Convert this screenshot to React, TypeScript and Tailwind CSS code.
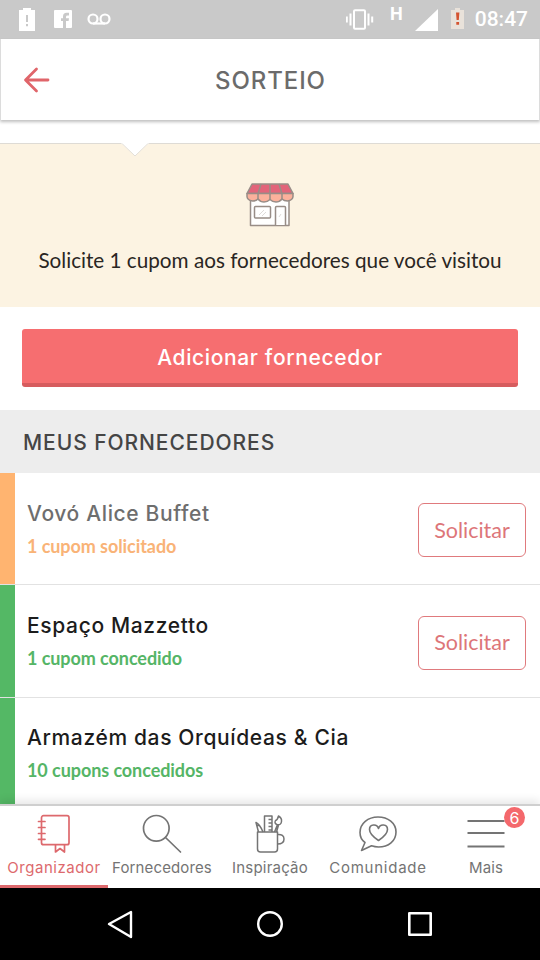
import React from "react";

const suppliers = [
  {
    name: "Vovó Alice Buffet",
    status: "1 cupom solicitado",
    bar: "bg-[#ffb470]",
    nameClass: "text-[#6e6e6e]",
    statusClass: "text-[#f9b377]",
    action: true,
  },
  {
    name: "Espaço Mazzetto",
    status: "1 cupom concedido",
    bar: "bg-[#54b865]",
    nameClass: "text-[#1c1c1c]",
    statusClass: "text-[#55b566]",
    action: true,
  },
  {
    name: "Armazém das Orquídeas & Cia",
    status: "10 cupons concedidos",
    bar: "bg-[#54b865]",
    nameClass: "text-[#1c1c1c]",
    statusClass: "text-[#55b566]",
    action: false,
  },
];

const tabs = [
  { label: "Organizador", icon: <NotebookIcon />, active: true, tracking: "tracking-[0.55px]" },
  { label: "Fornecedores", icon: <SearchIcon />, tracking: "tracking-[0.13px]" },
  { label: "Inspiração", icon: <MugIcon />, tracking: "tracking-[0.2px]" },
  { label: "Comunidade", icon: <CommunityIcon />, tracking: "tracking-[0.75px]" },
  { label: "Mais", icon: <MenuIcon />, badge: 6, tracking: "tracking-[0.1px]" },
];

export default function App() {
  return (
    <div className="flex flex-col w-[540px] h-[960px] overflow-hidden bg-white font-[Inter,sans-serif]">
      <StatusBar />

      <header className="relative z-10 flex items-center h-[81px] shrink-0 px-[22px] pt-px bg-white border-x border-[#dcdcdc] shadow-[0_2px_3px_rgba(0,0,0,0.25)]">
        <svg width="28" height="26" viewBox="0 0 28 26" fill="none" stroke="#e0656a" strokeWidth="2.800" strokeLinecap="round" strokeLinejoin="round">
          <path d="M13.500 2 2.500 13l11 11M3 13h22" />
        </svg>
        <h1 className="flex-1 pt-px pr-[27px] text-center text-[24px] font-medium tracking-[0.9px] text-[#6b6b6b]">
          SORTEIO
        </h1>
      </header>

      <main className="flex-1 min-h-0 overflow-hidden pt-[23px]">
        <Banner />

        <div className="px-[22px] pt-[22px] pb-[23px]">
          <button className="block w-full h-[58px] pt-[3px] rounded-[3px] bg-[#f66e70] border-b-4 border-[#d65c5e] text-white text-[21px] font-medium tracking-[0.63px]">
            Adicionar fornecedor
          </button>
        </div>

        <h2 className="flex items-center h-[63px] pt-0.5 px-[23px] bg-[#ededed] text-[21px] font-medium tracking-[0.93px] text-[#454545]">
          MEUS FORNECEDORES
        </h2>

        {suppliers.map((item) => (
          <Supplier key={item.name} {...item} />
        ))}
      </main>

      <nav className="relative z-10 grid grid-cols-5 h-[84px] shrink-0 bg-white border-t-2 border-[#cfcfcf] shadow-[0_-4px_8px_rgba(0,0,0,0.09)]">
        {tabs.map((tab) => (
          <Tab key={tab.label} {...tab} />
        ))}
      </nav>

      <div className="flex items-center justify-between h-[72px] shrink-0 px-[105px] bg-black">
        <svg width="30" height="30" viewBox="0 0 30 30" fill="none" stroke="#fff" strokeWidth="2.400" strokeLinejoin="round">
          <path d="M4 15 26 3v25z" />
        </svg>
        <svg width="30" height="30" viewBox="0 0 30 30" fill="none" stroke="#fff" strokeWidth="2.400">
          <circle cx="15" cy="15" r="11.800" />
        </svg>
        <svg width="30" height="30" viewBox="0 0 30 30" fill="none" stroke="#fff" strokeWidth="2.600" strokeLinejoin="round">
          <path d="M4.300 4.300h21.400v21.400H4.300z" />
        </svg>
      </div>
    </div>
  );
}

function StatusBar() {
  return (
    <div className="flex items-center justify-between h-[39px] shrink-0 pl-[19px] pr-[12px] bg-[#c9c9c9]">
      <div className="flex items-center">
        <svg width="16" height="26" viewBox="0 0 16 26">
          <path d="M0 3h4V1h8v2h4v21H0z" fill="#fff" />
          <path d="M7 8h2v7H7zM7 17h2v2.200H7z" fill="#c9c9c9" />
        </svg>
        <svg className="ml-[19px] -mt-px" width="18" height="18" viewBox="0 0 18 18">
          <path d="M1 0h16q1 0 1 1v16q0 1-1 1H1q-1 0-1-1V1q0-1 1-1z" fill="#fff" />
          <path d="M9 18v-7H7V8.300h2V6.500q0-3.700 3.700-3.700H15v2.700h-1.500q-1.500 0-1.500 1.400v1.400h3l-.4 2.700H12v7z" fill="#c9c9c9" />
        </svg>
        <svg className="ml-[15px] -mt-0.5" width="24" height="12" viewBox="0 0 24 12" fill="none" stroke="#fff" strokeWidth="2.200">
          <circle cx="6" cy="6" r="4.500" />
          <circle cx="18" cy="6" r="4.500" />
          <path d="M6 10.500h12" />
        </svg>
      </div>
      <div className="flex items-center">
        <svg width="28" height="21" viewBox="0 0 28 21" fill="none" stroke="#fff" strokeWidth="2">
          <rect x="8" y="1.200" width="11" height="18.500" rx="1" />
          <path d="M4.500 4.500v12M.8 7.500v6M22.500 4.500v12M26.200 7.500v6" />
        </svg>
        <span className="self-start ml-[16px] font-[Roboto,sans-serif] text-[18px] leading-[21px] font-bold text-white">H</span>
        <svg className="ml-[12px]" width="23" height="22" viewBox="0 0 23 22">
          <path d="M23 0v22H0z" fill="#fff" />
        </svg>
        <svg className="ml-[13px] mr-[11px] -mt-0.5" width="13" height="22" viewBox="0 0 13 22">
          <path d="M0 2h4V0h5v2h4v19H0z" fill="#e9e2da" />
          <path d="M5 4.500h3.400l-.6 7.500H5.600zM5.300 14h2.800v2.800H5.300z" fill="#d4532f" />
        </svg>
        <span className="pt-px font-[Roboto,sans-serif] text-[21px] font-medium text-white">08:47</span>
      </div>
    </div>
  );
}

function Banner() {
  return (
    <section className="relative flex flex-col items-center h-[164px] pt-[39px] bg-[#fcf3e2] border-t border-[#dedbd5]">
      <svg className="absolute left-[121px] -top-px" width="28" height="14" viewBox="0 0 28 14">
        <path d="M0 0h28L14 13z" fill="#fff" />
        <path d="M1 .5 14 13 27 .5" fill="none" stroke="#e3dfd8" strokeWidth="1" />
        <path d="M1.500 0h25" stroke="#fff" strokeWidth="1.500" />
      </svg>
      <ShopIcon />
      <p className="mt-[19px] font-[Lato,sans-serif] text-[20.700px] leading-[28px] whitespace-nowrap text-[#2a2623]">
        Solicite 1 cupom aos fornecedores que você visitou
      </p>
    </section>
  );
}

function Supplier({
  name,
  status,
  bar,
  nameClass,
  statusClass,
  action,
}: {
  name: string;
  status: string;
  bar: string;
  nameClass: string;
  statusClass: string;
  action: boolean;
}) {
  return (
    <div className="flex h-[112.4px] border-b border-[#e2e2e2]">
      <div className={`w-[15px] shrink-0 ${bar}`} />
      <div className="flex flex-1 items-center justify-between pl-3 pr-[14px]">
        <div className="flex flex-col pt-px">
          <span className={`text-[21px] leading-[28px] font-medium tracking-[0.64px] ${nameClass}`}>{name}</span>
          <span className={`mt-[5px] font-[Lato,sans-serif] text-[18px] leading-[26px] font-bold tracking-[-0.07px] ${statusClass}`}>
            {status}
          </span>
        </div>
        {action && (
          <button className="w-[108px] h-[54px] mt-[3px] pb-px rounded-[6px] border-[1.5px] border-[#e07a7d] font-[Lato,sans-serif] text-[21.5px] text-[#dd7679]">
            Solicitar
          </button>
        )}
      </div>
    </div>
  );
}

function Tab({
  label,
  icon,
  active,
  badge,
  tracking,
}: {
  label: string;
  icon: React.ReactNode;
  active?: boolean;
  badge?: number;
  tracking: string;
}) {
  return (
    <div
      className={`relative flex flex-col items-center pt-[6px] ${
        active ? "text-[#dd696d] border-b-[3px] border-[#dd696d]" : "text-[#747474]"
      }`}
    >
      {icon}
      <span className={`mt-1 text-[15px] leading-[20px] whitespace-nowrap ${tracking}`}>{label}</span>
      {badge && (
        <span className="absolute top-[1px] right-[15px] flex items-center justify-center w-[21px] h-[21px] rounded-full bg-[#f4686c] text-white text-[16px]">
          {badge}
        </span>
      )}
    </div>
  );
}

function ShopIcon() {
  return (
    <svg width="48" height="44" viewBox="0 0 48 44" stroke="#988d87" strokeWidth="1.500" strokeLinejoin="round">
      <path d="M4.500 14h38.500v28.500H4.500z" fill="#fff" />
      <path d="M6 1h36l5 9.500H1z" fill="#e2647a" />
      <path d="M1 10.500h46v3q0 3.500-5.500 4.500-3.500 0-5.500-2-2.500 3-6 3t-6-2.500q-2.500 2.500-6 2.500t-6-3q-2 2-5.500 2Q1 17 1 13.500z" fill="#fbb19c" />
      <path d="M15 1l-3 10v5M24 1v16M33 1l3 10v5" fill="none" />
      <rect x="8.500" y="23.500" width="16" height="11.500" rx="1" fill="#fff" />
      <path d="M29.500 42V24.500q0-1 1-1h8q1 0 1 1V42" fill="#fff" />
      <path d="m13 32 5-5m-2 6 4-4M35 31l-2 3" stroke="#dedbd9" strokeWidth="1" />
    </svg>
  );
}

function NotebookIcon() {
  return (
    <svg width="34" height="42" viewBox="0 0 34 42" fill="none" stroke="currentColor" strokeWidth="1.700" strokeLinejoin="round" strokeLinecap="round">
      <rect x="4.500" y="3.700" width="27.500" height="29" rx="2" />
      <path d="M1.500 9.500h6.500M1.500 15.500h6.500M1.500 21.500h6.500M1.500 27.300h6.500M18.500 33v7l4.500-3.500 4.500 3.500v-7" />
    </svg>
  );
}

function SearchIcon() {
  return (
    <svg width="42" height="42" viewBox="0 0 42 42" fill="none" stroke="currentColor" strokeWidth="1.700" strokeLinecap="round">
      <circle cx="15.300" cy="16.300" r="12.800" />
      <path d="m24.500 25.500 15 14.500" />
    </svg>
  );
}

function MugIcon() {
  return (
    <svg width="30" height="42" viewBox="0 0 30 42" fill="none" stroke="currentColor" strokeWidth="1.500" strokeLinejoin="round">
      <path d="M2.500 20h20v17q0 3-3 3h-14q-3 0-3-3z" />
      <path d="M22.500 22.500q6.500-.5 6.500 4.500t-6.500 5" />
      <path d="M9.500 20V4h7.500v16M17 7.500h-3.500M17 11h-3.500M17 14.500h-3.500M17 18h-3.500" />
      <path d="M3.500 20 1 10.500q4 2 7 9.500M1.500 14l3-1" />
      <path d="m19.500 20 3-7.500M21.500 20l2-7M22 12.500q-3-1-1.500-4 2-.5 3-4.500 3.500 2 3 5.500-.5 4-4.500 3z" />
    </svg>
  );
}

function CommunityIcon() {
  return (
    <svg width="40" height="42" viewBox="0 0 40 42" fill="none" stroke="currentColor" strokeWidth="1.600" strokeLinejoin="round">
      <path d="M7 30.500C3.500 28 2 24.500 2 20.500 2 11.500 10 5 20 5s18 6 18 15-7.500 15-17.500 15c-3 0-5-.5-7-1.200L3.500 38.500z" />
      <path d="M20.500 28.500C14.500 24.500 11.500 21.500 11.500 17.500c0-5.500 7.500-6 9-1 1.500-5 9-4.500 9 1 0 4-3 7-9 11z" />
    </svg>
  );
}

function MenuIcon() {
  return (
    <svg width="38" height="42" viewBox="0 0 38 42" fill="none" stroke="currentColor" strokeWidth="2">
      <path d="M.5 9h37M.5 21h37M.5 34.500h37" />
    </svg>
  );
}
